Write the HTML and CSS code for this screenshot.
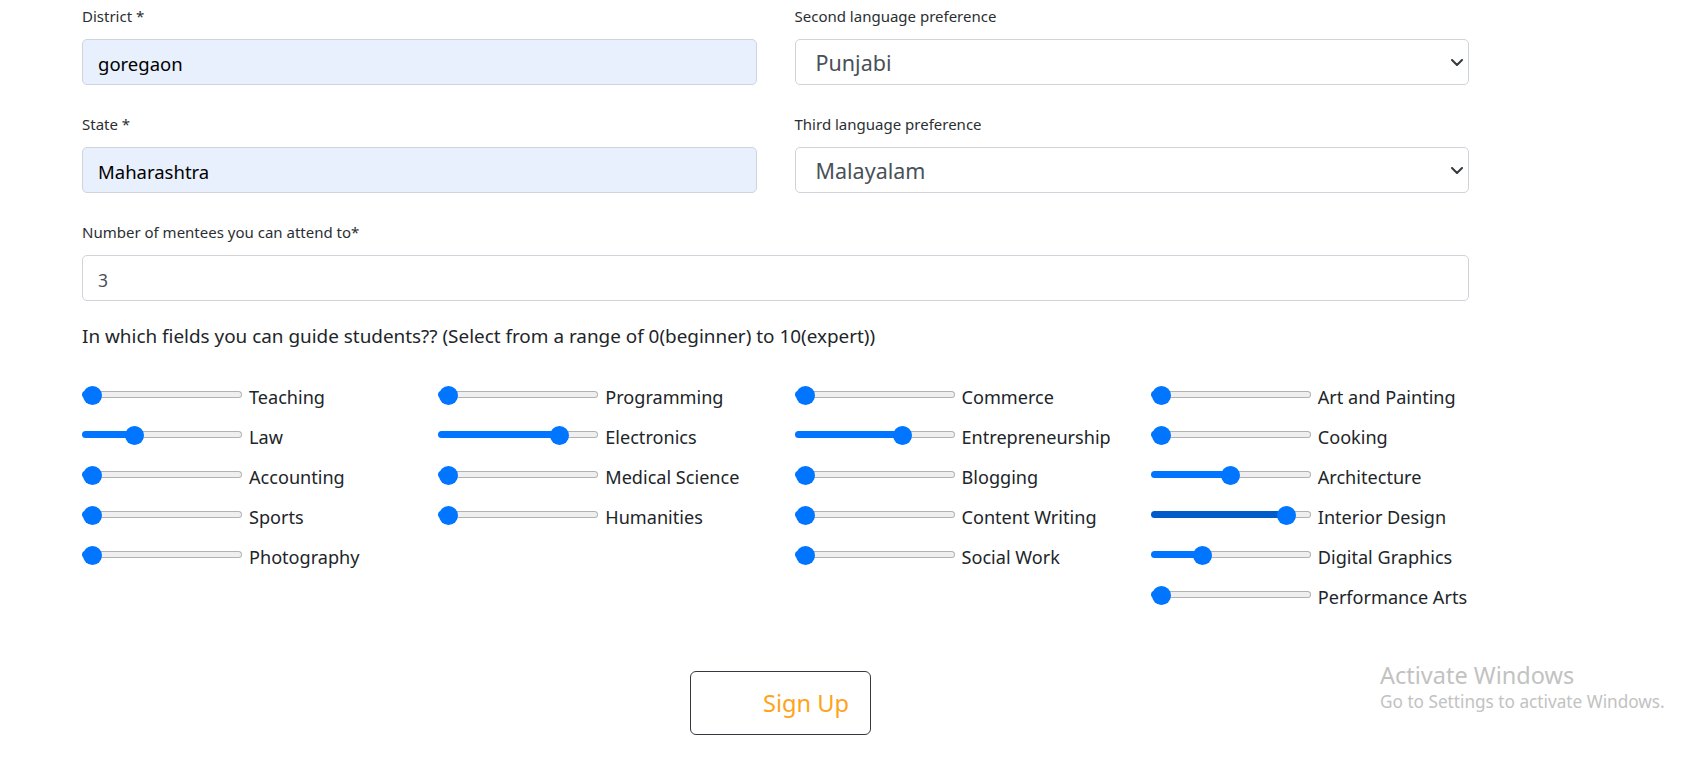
FILE: index.html
```html
<!DOCTYPE html>
<html lang="en">
<head>
<meta charset="utf-8">
<title>Mentor Sign Up</title>
<link rel="stylesheet" href="styles.css">
</head>
<body>
<main class="form">
  <div class="two-col">
    <div class="col">
      <div class="group">
        <label class="lbl">District *</label>
        <input class="ctl autofill" type="text" value="goregaon">
      </div>
      <div class="group">
        <label class="lbl">State *</label>
        <input class="ctl autofill" type="text" value="Maharashtra">
      </div>
    </div>
    <div class="col">
      <div class="group">
        <label class="lbl">Second language preference</label>
        <div class="select-wrap">
          <select class="ctl sel"><option>Punjabi</option></select>
          <svg class="chev" width="12" height="7" viewBox="0 0 12 7"><path d="M1 1l5 5 5-5" fill="none" stroke="#343a40" stroke-width="2" stroke-linecap="round" stroke-linejoin="round"/></svg>
        </div>
      </div>
      <div class="group">
        <label class="lbl">Third language preference</label>
        <div class="select-wrap">
          <select class="ctl sel"><option>Malayalam</option></select>
          <svg class="chev" width="12" height="7" viewBox="0 0 12 7"><path d="M1 1l5 5 5-5" fill="none" stroke="#343a40" stroke-width="2" stroke-linecap="round" stroke-linejoin="round"/></svg>
        </div>
      </div>
    </div>
  </div>
  <div class="group last">
    <label class="lbl">Number of mentees you can attend to*</label>
    <input class="ctl num" type="text" value="3">
  </div>
  <p class="question">In which fields you can guide students?? (Select from a range of 0(beginner) to 10(expert))</p>
  <div class="skills">
    <div class="skill-col">
      <div class="skill"><input class="range" type="range" min="0" max="10" value="0" style="--v:0"><span class="skill-name">Teaching</span></div>
      <div class="skill"><input class="range" type="range" min="0" max="10" value="3" style="--v:3"><span class="skill-name">Law</span></div>
      <div class="skill"><input class="range" type="range" min="0" max="10" value="0" style="--v:0"><span class="skill-name">Accounting</span></div>
      <div class="skill"><input class="range" type="range" min="0" max="10" value="0" style="--v:0"><span class="skill-name">Sports</span></div>
      <div class="skill"><input class="range" type="range" min="0" max="10" value="0" style="--v:0"><span class="skill-name">Photography</span></div>
    </div>
    <div class="skill-col">
      <div class="skill"><input class="range" type="range" min="0" max="10" value="0" style="--v:0"><span class="skill-name">Programming</span></div>
      <div class="skill"><input class="range" type="range" min="0" max="10" value="8" style="--v:8"><span class="skill-name">Electronics</span></div>
      <div class="skill"><input class="range" type="range" min="0" max="10" value="0" style="--v:0"><span class="skill-name">Medical Science</span></div>
      <div class="skill"><input class="range" type="range" min="0" max="10" value="0" style="--v:0"><span class="skill-name">Humanities</span></div>
    </div>
    <div class="skill-col">
      <div class="skill"><input class="range" type="range" min="0" max="10" value="0" style="--v:0"><span class="skill-name">Commerce</span></div>
      <div class="skill"><input class="range" type="range" min="0" max="10" value="7" style="--v:7"><span class="skill-name">Entrepreneurship</span></div>
      <div class="skill"><input class="range" type="range" min="0" max="10" value="0" style="--v:0"><span class="skill-name">Blogging</span></div>
      <div class="skill"><input class="range" type="range" min="0" max="10" value="0" style="--v:0"><span class="skill-name">Content Writing</span></div>
      <div class="skill"><input class="range" type="range" min="0" max="10" value="0" style="--v:0"><span class="skill-name">Social Work</span></div>
    </div>
    <div class="skill-col">
      <div class="skill"><input class="range" type="range" min="0" max="10" value="0" style="--v:0"><span class="skill-name">Art and Painting</span></div>
      <div class="skill"><input class="range" type="range" min="0" max="10" value="0" style="--v:0"><span class="skill-name">Cooking</span></div>
      <div class="skill"><input class="range" type="range" min="0" max="10" value="5" style="--v:5"><span class="skill-name">Architecture</span></div>
      <div class="skill"><input class="range hovered" type="range" min="0" max="10" value="9" style="--v:9"><span class="skill-name">Interior Design</span></div>
      <div class="skill"><input class="range" type="range" min="0" max="10" value="3" style="--v:3"><span class="skill-name">Digital Graphics</span></div>
      <div class="skill"><input class="range" type="range" min="0" max="10" value="0" style="--v:0"><span class="skill-name">Performance Arts</span></div>
    </div>
  </div>
  <button class="signup" type="button">Sign Up</button>
</main>
<div class="watermark">
  <div class="wm-title">Activate Windows</div>
  <div class="wm-sub">Go to Settings to activate Windows.</div>
</div>
</body>
</html>
```

FILE: styles.css
```css
html, body {
  margin: 0;
  padding: 0;
  background: #ffffff;
}

body {
  font-family: "Noto Sans", "Open Sans", sans-serif;
  color: #212529;
  position: relative;
  width: 1687px;
  height: 757px;
  overflow: hidden;
}

.form {
  width: 1387px;
  margin-left: 82px;
  padding-top: 5px;
}

.two-col {
  display: grid;
  grid-template-columns: 1fr 1fr;
  column-gap: 38px;
}

.group {
  display: flex;
  flex-direction: column;
  margin-bottom: 28px;
}

.group.last {
  margin-bottom: 21px;
}

.lbl {
  font-size: 15px;
  line-height: 22px;
  margin-bottom: 12px;
  color: #2b2f33;
}

.ctl {
  box-sizing: border-box;
  height: 46px;
  width: 100%;
  border: 1px solid #ced4da;
  border-radius: 5px;
  padding: 3px 15px 0;
  font-family: "Noto Sans", "Open Sans", sans-serif;
  background: #ffffff;
  margin: 0;
  outline: none;
}

.autofill {
  background: #e8f0fe;
  color: #000000;
  font-size: 18.5px;
}

.num {
  color: #495057;
  font-size: 17.5px;
}

.select-wrap {
  position: relative;
}

.sel {
  -webkit-appearance: none;
  appearance: none;
  color: #495057;
  font-size: 21.5px;
  padding-left: 20px;
  padding-top: 1px;
  display: block;
}

.chev {
  position: absolute;
  right: 6px;
  top: 20px;
  pointer-events: none;
}

.question {
  margin: 0;
  font-size: 18.9px;
  line-height: 28px;
  color: #212529;
}

.skills {
  display: grid;
  grid-template-columns: repeat(4, 1fr);
  column-gap: 38px;
  margin-top: 24px;
  align-items: start;
}

.skill-col {
  display: flex;
  flex-direction: column;
}

.skill {
  height: 40px;
  display: flex;
  align-items: center;
  gap: 7px;
}

.skill-name {
  font-size: 18.1px;
  padding-top: 5px;
  color: #212529;
  white-space: nowrap;
}

.range {
  --fill: #0075ff;
  --pos: calc(10.5px + 139px * var(--v) / 10);
  -webkit-appearance: none;
  appearance: none;
  width: 160px;
  height: 19px;
  margin: 0;
  padding: 0;
  background: transparent;
  flex: none;
}

.range.hovered {
  --fill: #005cc8;
}

.range::-webkit-slider-runnable-track {
  height: 7px;
  border: 1px solid transparent;
  border-radius: 5px;
  background:
    linear-gradient(to right, var(--fill) 0, var(--fill) var(--pos), transparent var(--pos)) border-box,
    linear-gradient(#efefef, #efefef) padding-box,
    linear-gradient(#b2b2b2, #b2b2b2) border-box;
}

.range::-webkit-slider-thumb {
  -webkit-appearance: none;
  appearance: none;
  width: 19px;
  height: 19px;
  border-radius: 50%;
  border: none;
  background: #0075ff;
  margin-top: -6px;
}

.signup {
  display: block;
  box-sizing: border-box;
  width: 181px;
  height: 64px;
  margin: 57px 0 0 608px;
  padding: 0 0 0 72px;
  text-align: left;
  background: #ffffff;
  border: 1px solid #343a40;
  border-radius: 6px;
  font-family: "Noto Sans", "Open Sans", sans-serif;
  font-size: 23.6px;
  color: #ffa31a;
}

.watermark {
  position: absolute;
  left: 1380px;
  top: 659px;
  color: #c2c2c2;
}

.wm-title {
  font-size: 23.5px;
  line-height: 32px;
}

.wm-sub {
  font-size: 17.2px;
  line-height: 22px;
}
```
